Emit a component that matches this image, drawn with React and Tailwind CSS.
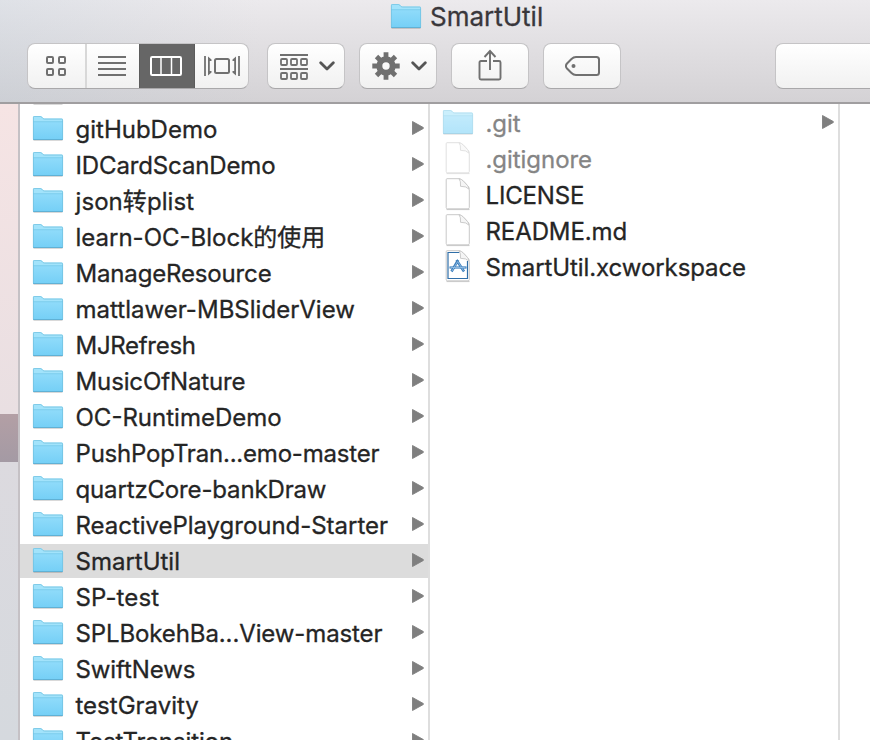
import React from "react";

const folders = [
  { name: "", tracking: "" },
  { name: "gitHubDemo", tracking: "tracking-[0px]" },
  { name: "IDCardScanDemo", tracking: "tracking-[-0.13px]" },
  { name: "json转plist", tracking: "tracking-[0.08px]" },
  { name: "learn-OC-Block的使用", tracking: "tracking-[0px]" },
  { name: "ManageResource", tracking: "tracking-[-0.16px]" },
  { name: "mattlawer-MBSliderView", tracking: "tracking-[0.02px]" },
  { name: "MJRefresh", tracking: "tracking-[-0.3px]" },
  { name: "MusicOfNature", tracking: "tracking-[-0.12px]" },
  { name: "OC-RuntimeDemo", tracking: "tracking-[0px]" },
  { name: "PushPopTran...emo-master", tracking: "tracking-[-0.2px]" },
  { name: "quartzCore-bankDraw", tracking: "tracking-[-0.15px]" },
  { name: "ReactivePlayground-Starter", tracking: "tracking-[-0.03px]" },
  { name: "SmartUtil", tracking: "tracking-[0px]", selected: true },
  { name: "SP-test", tracking: "tracking-[0.12px]" },
  { name: "SPLBokehBa...View-master", tracking: "tracking-[-0.11px]" },
  { name: "SwiftNews", tracking: "tracking-[-0.1px]" },
  { name: "testGravity", tracking: "tracking-[0px]" },
  { name: "TestTransition", tracking: "tracking-[-0.1px]" },
];

const files = [
  { name: ".git", kind: "folder", dim: true, arrow: true, tracking: "tracking-[-0.1px]" },
  { name: ".gitignore", kind: "file", dim: true, tracking: "tracking-[-0.05px]" },
  { name: "LICENSE", kind: "file", tracking: "tracking-[-0.15px]" },
  { name: "README.md", kind: "file", tracking: "tracking-[-0.1px]" },
  { name: "SmartUtil.xcworkspace", kind: "workspace", tracking: "tracking-[-0.08px]" },
];

function FolderIcon() {
  return (
    <svg width="32" height="26" viewBox="0 0 32 26" className="block shrink-0">
      <defs>
        <linearGradient id="folderFront" x1="0" y1="0" x2="0" y2="1">
          <stop offset="0" stopColor="#8fdbfa" />
          <stop offset="1" stopColor="#74cff6" />
        </linearGradient>
      </defs>
      <path d="M1.500 24.500H30.500" stroke="#000" strokeOpacity=".15" />
      <path d="M1 1.400Q1 0 2.400 0H8.300Q9.300 0 10 .8L11.300 2.200Q11.800 2.600 12.800 2.600H29.600Q31 2.600 31 4V23Q31 24 30 24H2Q1 24 1 23Z" fill="#a2e3fb" />
      <path d="M1 6H31V23Q31 24 30 24H2Q1 24 1 23Z" fill="url(#folderFront)" />
      <path d="M1 5.700H31" stroke="#6fc4e8" strokeWidth=".7" />
      <path d="M1.400 23V1.400Q1.400 .4 2.400 .4H8.300Q9.100 .4 9.700 1.100L11 2.500Q11.800 3 12.800 3H29.600Q30.600 3 30.600 4V23" fill="none" stroke="#72c2e0" strokeWidth=".8" />
      <path d="M1.200 23.500H30.800" stroke="#60b1d5" />
    </svg>
  );
}

function FileIcon({ workspace }) {
  return (
    <svg width="32" height="34" viewBox="0 0 32 34" className="block shrink-0">
      <path d="M4.500 31.500H27.500" stroke="#000" strokeOpacity=".2" strokeWidth="1.200" />
      <path d="M5 .7H17Q19.500 1 21.500 3.200L25.500 7.500Q27.300 9.300 27.300 11.700V29.500Q27.300 30.800 26 30.800H5.500Q4.200 30.800 4.200 29.500V1.700Q4.200 .7 5 .7Z" fill="#fff" stroke="#c9c9c9" />
      {workspace && (
        <g fill="none" stroke="#2f6ea8">
          <path d="M17.500 2.500H6V28.500H25.500V11" strokeWidth="1.200" />
          <path d="M9.500 21.500L16.200 10M14.500 10L22 21.500" strokeWidth="2.500" stroke="#3d7fbc" />
          <path d="M7.500 17.500H24.500" strokeWidth="2.200" stroke="#3d7fbc" />
          <path d="M10 21L15.700 11.500M15.700 11.500L21.500 20.700M8.500 17.500H23.500" strokeWidth=".8" stroke="#9cc4e8" />
        </g>
      )}
      <path d="M17 .7Q19 3 18.500 8.300Q24.300 8 27 11.200Q26.500 8.500 25.500 7.500L21.500 3.200Q19.500 1 17 .7Z" fill="#f5f5f5" stroke="#c6c6c6" strokeWidth=".9" />
    </svg>
  );
}

function Arrow() {
  return (
    <svg width="13" height="16" viewBox="0 0 13 16" className="block shrink-0">
      <path d="M1.500 1.500L12.300 7.500V8.500L1.500 14.500Z" fill="#7f7f7f" stroke="#7f7f7f" strokeWidth=".9" strokeLinejoin="round" />
    </svg>
  );
}

function Row({ name, kind = "folder", selected, dim, arrow, tracking }) {
  return (
    <div className={`flex h-[34px] shrink-0 items-center pl-3 pr-1 ${selected ? "bg-[#dcdcdc]" : ""}`}>
      <div className={dim ? "opacity-55" : ""}>
        {kind === "folder" ? <FolderIcon /> : <FileIcon workspace={kind === "workspace"} />}
      </div>
      <span className={`ml-[11.5px] flex-1 whitespace-nowrap pt-[2px] text-[24px] leading-[34px] [-webkit-text-stroke:0.3px] ${tracking} ${dim ? "text-[#858585]" : "text-[#252525]"}`}>
        {name}
      </span>
      {arrow && <div className="pb-[2px]"><Arrow /></div>}
    </div>
  );
}

function ToolButton({ children }) {
  return (
    <div className="flex h-[46px] w-[78px] items-center justify-center rounded-[8px] border border-[#c5c4c6] border-b-[#a9a8aa] bg-linear-to-b from-white to-[#f1f1f1]">
      {children}
    </div>
  );
}

function Chevron() {
  return (
    <svg width="16" height="10" viewBox="0 0 16 10" fill="none" stroke="#565656" strokeWidth="2.800" strokeLinecap="round" strokeLinejoin="round">
      <path d="M1.700 1.700L8 8L14.300 1.700" />
    </svg>
  );
}

function GridIcon() {
  return (
    <svg width="22" height="22" viewBox="0 0 22 22" fill="none" stroke="#707070" strokeWidth="2">
      <rect x="2" y="2" width="6" height="6" rx="1" />
      <rect x="14" y="2" width="6" height="6" rx="1" />
      <rect x="2" y="14" width="6" height="6" rx="1" />
      <rect x="14" y="14" width="6" height="6" rx="1" />
    </svg>
  );
}

function ArrangeIcon() {
  return (
    <svg width="28" height="28" viewBox="0 0 28 28" fill="none" stroke="#707070" strokeWidth="1.800">
      <path d="M0 2H28M0 16H28" />
      {[1, 11, 21].map((x) => (
        <React.Fragment key={x}>
          <rect x={x} y="6" width="6" height="6" rx="1" />
          <rect x={x} y="20" width="6" height="6" rx="1" />
        </React.Fragment>
      ))}
    </svg>
  );
}

function GearIcon() {
  return (
    <svg width="28" height="28" viewBox="0 0 28 28">
      <g stroke="#707070" strokeWidth="4.800">
        <path d="M14 .3V8M14 20V27.700M.3 14H8M20 14H27.700M4.500 4.500L9 9M19 19L23.500 23.500M4.500 23.500L9 19M19 9L23.500 4.500" />
      </g>
      <circle cx="14" cy="14" r="6.700" fill="none" stroke="#707070" strokeWidth="6" />
    </svg>
  );
}

function Toolbar() {
  return (
    <div className="flex h-[46px] pl-[27px]">
      <div className="flex h-[46px] w-[222px] overflow-hidden rounded-[8px] border border-[#c5c4c6] border-b-[#a9a8aa] bg-linear-to-b from-white to-[#f1f1f1]">
        <div className="flex w-[59px] items-center justify-center border-r-2 border-[#d8d8d8] pr-px">
          <GridIcon />
        </div>
        <div className="flex w-[52px] items-center justify-center pr-[2px]">
          <svg width="28" height="20" viewBox="0 0 28 20" stroke="#707070" strokeWidth="2" className="shrink-0">
            <path d="M0 1H28M0 7H28M0 13H28M0 19H28" />
          </svg>
        </div>
        <div className="-my-px flex w-[56px] items-center justify-center border-x border-[#5c5c5c] bg-[#666666] pr-[2px]">
          <svg width="32" height="20" viewBox="0 0 32 20" fill="none" stroke="#fff">
            <rect x="1" y="1" width="30" height="18" rx="1.200" strokeWidth="2" />
            <path d="M11 1V19M21.500 1V19" strokeWidth="1.500" />
          </svg>
        </div>
        <div className="flex flex-1 items-center justify-center">
          <svg width="36" height="20" viewBox="0 0 36 20" fill="none" stroke="#707070">
            <path d="M1 0V20M35 0V20" strokeWidth="1.800" />
            <path d="M4 .5L7.500 3.500V5H5.800V15H7.500V16.500L4 19.500ZM32 .5L28.500 3.500V5H30.200V15H28.500V16.500L32 19.500Z" fill="#707070" stroke="none" />
            <rect x="11" y="3" width="14" height="14" rx="1.500" strokeWidth="2" />
          </svg>
        </div>
      </div>

      <div className="ml-[18px] flex gap-[14px]">
        <ToolButton>
          <div className="flex items-center gap-[11px] pl-[2px]">
            <div className="pt-[2px]"><ArrangeIcon /></div>
            <Chevron />
          </div>
        </ToolButton>
        <ToolButton>
          <div className="flex items-center gap-[11px] pl-[2px]"><GearIcon /><Chevron /></div>
        </ToolButton>
        <ToolButton>
          <svg width="24" height="32" viewBox="0 0 24 32" fill="none" stroke="#707070" strokeWidth="1.900" className="mb-[3px]">
            <path d="M9 12H3Q1.500 12 1.500 13.500V29Q1.500 30.500 3 30.500H21Q22.500 30.500 22.500 29V13.500Q22.500 12 21 12H15M12 21V2.500M6.500 8L12 2L17.500 8" />
          </svg>
        </ToolButton>
        <ToolButton>
          <svg width="35" height="20" viewBox="0 0 35 20" fill="none" stroke="#707070" strokeWidth="2">
            <path d="M11 1H31.500Q34 1 34 3.500V16.500Q34 19 31.500 19H11Q8.500 19 6.500 17L2 12.500Q-.2 10 2 7.500L6.500 3Q8.500 1 11 1Z" />
            <circle cx="8.500" cy="10" r="2" fill="#707070" stroke="none" />
          </svg>
        </ToolButton>
      </div>
      <div className="ml-[154px] h-[46px] flex-1 rounded-l-[8px] border border-r-0 border-[#c5c4c6] border-b-[#a9a8aa] bg-linear-to-b from-white to-[#f1f1f1]" />
    </div>
  );
}

export default function App() {
  return (
    <div className="flex h-[740px] w-[870px] flex-col overflow-hidden bg-white font-['Inter','Noto_Sans_CJK_SC',sans-serif]">
      <header className="h-[104px] shrink-0 border-b-2 border-[#a09ea0] bg-linear-to-b from-[#eceaed] to-[#d4d2d5]">
        <div className="h-full bg-linear-to-r from-[#b8c8d540] to-transparent to-30%">
          <div className="flex h-[43px] items-start pl-[390px] pt-[4px]">
            <FolderIcon />
            <h1 className="-mt-[4px] ml-[8px] whitespace-nowrap text-[26px] leading-[34px] tracking-[0px] text-[#39373b] [-webkit-text-stroke:0.3px]">SmartUtil</h1>
          </div>
          <Toolbar />
        </div>
      </header>

      <main className="flex min-h-0 flex-1">
        <aside className="flex w-[20px] shrink-0 flex-col border-r-2 border-[#c5c1c5]">
          <div className="h-[310px] bg-linear-to-b from-[#f6e4e4] to-[#e9dfe2]" />
          <div className="h-[48px] bg-linear-to-b from-[#b39fa5] to-[#a49aa4]" />
          <div className="flex-1 bg-linear-to-b from-[#dcdadf] to-[#d5d9de]" />
        </aside>
        <section className="w-[410px] shrink-0 overflow-hidden border-r-2 border-[#dedede]">
          <div className="-mt-[28px] flex flex-col gap-[2px]">
            {folders.map((item) => <Row key={item.name} {...item} arrow={item.name !== ""} />)}
          </div>
        </section>
        <section className="w-[410px] shrink-0 overflow-hidden border-r-2 border-[#dedede]">
          <div className="mt-[2px] flex flex-col gap-[2px]">
            {files.map((item) => <Row key={item.name} {...item} />)}
          </div>
        </section>
        <section className="flex-1 bg-white" />
      </main>
    </div>
  );
}
